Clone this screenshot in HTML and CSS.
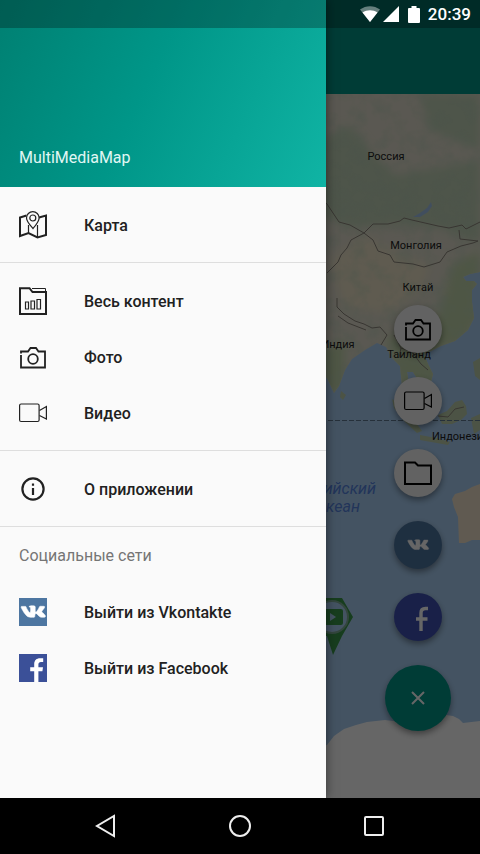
FILE: index.html
```html
<!DOCTYPE html>
<html lang="ru">
<head>
  <meta charset="UTF-8" />
  <meta name="viewport" content="width=device-width, initial-scale=1" />
  <title>MultiMediaMap</title>
  <link rel="stylesheet" href="styles.css">
</head>
<body>
  <!-- shared icons -->
  <svg class="sprite" aria-hidden="true">
    <symbol id="icon-camera" viewBox="0 0 28 28">
      <path d="M2 12V24.500H26V8.500H19.500L17 5H11.500L9 8.500H2V10.500" fill="none" stroke="currentColor" stroke-width="1.800" />
      <circle cx="14" cy="16" r="4.800" fill="none" stroke="currentColor" stroke-width="1.800" />
    </symbol>
    <symbol id="icon-video" viewBox="0 0 28 28">
      <rect x="0.600" y="5" width="19.500" height="17.500" rx="1.500" fill="none" stroke="currentColor" stroke-width="1.200" />
      <path d="M20.500 11.500L27.400 7.500V20L20.500 16.500" fill="none" stroke="currentColor" stroke-width="1.200" />
    </symbol>
    <symbol id="icon-vk" viewBox="0 0 28 28">
      <path d="M13.600 19.300h1.300s.5-.1.700-.4c.2-.3.200-.8.200-.8s0-2.300 1-2.700c1-.3 2.400 2.300 3.800 3.200 1 .8 1.900.6 1.900.6h3c1.200-.1.900-1.300.7-1.600-.4-.8-1.300-1.700-2.600-2.900-1.300-1.200-1.100-1 .5-3.100 1-1.400 1.700-2.300 1.500-2.900-.2-.5-1-.4-1-.4h-3.200c-.6 0-.8.2-1 .6 0 0-.7 1.600-1.500 2.900-1.400 2.400-2 2.500-2.300 2.300-.5-.4-.4-1.500-.4-2.300 0-2.500.4-3.500-.8-3.800-.4-.1-.7-.2-1.700-.2-1.300 0-2.400 0-3 .3-.5.200-.8.600-.6.700.3 0 .8.200 1.100.5.400.5.400 1.600.4 1.600s.2 3.200-.5 3.600c-.5.3-1.200-.3-2.700-2.800-.8-1.300-1.300-2.800-1.300-2.800-.2-.4-.4-.5-.9-.5H3c-1 0-1 .4-.8 1.100 0 0 2.600 5.600 5.400 8.200 1.900 1.700 3.900 1.600 6 1.600z" fill="currentColor" stroke="currentColor" stroke-width="0.600" />
    </symbol>
    <symbol id="icon-fb" viewBox="0 0 28 28">
      <path d="M15.200 28V17.200H11.200V13.200H15.200V10.200C15.200 6.200 17.600 4.200 21 4.200H24.200V8H22C20.200 8 19.400 8.900 19.400 10.400V13.200H24L23.400 17.200H19.400V28Z" fill="currentColor" />
    </symbol>
  </svg>

  <div class="screen">
    <div class="app">
      <header class="app-bar"></header>

      <main class="map-wrap">
        <svg class="map" viewBox="0 94 480 704" preserveAspectRatio="xMaxYMin slice">
          <defs>
            <filter id="soft" x="-20%" y="-20%" width="140%" height="140%">
              <feGaussianBlur stdDeviation="5" />
            </filter>
            <filter id="relief" x="0" y="0" width="100%" height="100%">
              <feTurbulence type="fractalNoise" baseFrequency="0.06" numOctaves="3" seed="4" />
              <feColorMatrix values="0 0 0 0 0.5  0 0 0 0 0.65  0 0 0 0 0.5  0 2.6 0 0 -1.1" />
            </filter>
            <clipPath id="land-clip">
              <path d="M300 94H480V272L470 274L463 277L466 281L474 281L477 284L472 290L472 302L474 318L468 330L455 341L441 346L431 351L424 354L428 364L433 374L431 382L424 388L418 380L413 372L407 372L409 384L414 396L410 398L402 386L400 366L392 358L386 347L377 343L365 350L352 359L345 370L339 386L334 393L328 380L300 340Z" />
            </clipPath>
          </defs>

          <!-- water and continents -->
          <rect class="sea" y="94" width="480" height="704" />
          <g clip-path="url(#land-clip)">
            <rect class="land" y="94" width="480" height="330" />
            <g filter="url(#soft)">
              <path class="forest" d="M320 140L350 125L370 150L395 175L480 160V245L440 228L400 225L350 228L320 215Z" />
              <path class="forest" d="M420 94H480V150L430 130Z" />
              <path class="desert" d="M330 262L362 235L395 252L430 266L420 290L390 312L345 308Z" />
              <path class="lowland" d="M452 265L480 250V320L460 345L420 350L440 310Z" />
              <path class="lowland" d="M320 350L345 340L345 390L325 400Z" />
              <path class="lowland" d="M386 335L440 340L440 390L400 390Z" />
            </g>
            <rect class="relief" y="94" x="300" width="180" height="310" filter="url(#relief)" />
            <path class="lake" d="M413 217L420 213L427 208L431 202L432 206L428 212L420 217Z" />
          </g>
          <g class="island">
            <path d="M341 391L346 395L343 400L340 397Z" />
            <path d="M392 399L403 407L414 420L422 431L417 433L404 421L394 408Z" />
            <path d="M438 415L447 411L455 402L462 400L466 406L467 414L461 420L452 424L442 424Z" />
            <path d="M420 435L436 438L450 442L448 445L420 440Z" />
            <path d="M473 362L480 358V380L475 376Z" />
            <path d="M471 418L480 414V430L474 434Z" />
          </g>
          <path class="australia" d="M480 484L472 487L465 491L455 494L452 499L454 507L458 517L459 543L465 543L472 540L480 540Z" />
          <path class="ice" d="M300 752L327 745L334 736L344 729L356 725L367 722L385 720L410 723L438 721L446 715L453 716L459 719L463 723L480 721V798H300Z" />

          <!-- borders -->
          <g class="border">
            <path d="M320 197L327 204L339 222L350 225L364 233L373 224L388 224L400 221L404 218L412 220L438 226L449 228L462 225L466 229L480 222" />
            <path d="M364 233L373 240L378 251L390 255L394 262L413 264L424 267L440 262L447 252L461 246L473 243L478 241L460 239L459 230" />
            <path d="M364 233L351 240L347 248L341 255L338 262L327 273" />
            <path d="M337 298L337 307L344 314L355 321L364 324L372 328L380 327L387 335L381 345" />
            <path d="M338 316L348 323L366 330" />
            <path d="M394 335L401 348L399 358M401 348L412 352L421 364L428 370M410 340L424 348" />
            <path d="M438 416L448 417L455 409L464 407" />
          </g>
          <path class="equator" d="M300 420.500H480" />

          <!-- labels -->
          <g class="label" text-anchor="middle">
            <text x="386" y="160">Россия</text>
            <text x="416" y="249">Монголия</text>
            <text x="418" y="291">Китай</text>
            <text x="338" y="348">Индия</text>
            <text x="409" y="358">Таиланд</text>
          </g>
          <text class="label" x="432" y="440">Индонезия</text>
          <g class="label label-sea" text-anchor="end">
            <text x="376" y="494">Индийский</text>
            <text x="360" y="512">океан</text>
          </g>

          <!-- video marker -->
          <g class="marker">
            <path class="marker-body" d="M324 598H342L353 617L342 636L333 655L327 636H324L312 617Z" />
            <circle class="marker-hole" cx="332" cy="617" r="16" />
            <rect class="marker-body" x="322" y="609" width="21" height="16" rx="2" />
            <path class="marker-play" d="M330 613L336 617L330 621Z" />
          </g>
        </svg>
      </main>

      <div class="fab-menu">
        <button class="fab" aria-label="Фото"><svg class="icon"><use href="#icon-camera" /></svg></button>
        <button class="fab" aria-label="Видео"><svg class="icon"><use href="#icon-video" /></svg></button>
        <button class="fab" aria-label="Файлы">
          <svg class="icon" viewBox="0 0 28 28">
            <path d="M1 25V3.500H11L14 6.500H27V25Z" fill="none" stroke="currentColor" stroke-width="2" />
          </svg>
        </button>
        <button class="fab fab-vk" aria-label="Vkontakte"><svg class="icon icon-small"><use href="#icon-vk" /></svg></button>
        <button class="fab fab-fb" aria-label="Facebook">
          <svg class="icon" viewBox="0 0 28 28">
            <path d="M17 28V16H12M24 5.500H21.500Q17 5.500 17 10V16H23.500" fill="none" stroke="currentColor" stroke-width="3.400" />
          </svg>
        </button>
        <button class="fab fab-main" aria-label="Закрыть">
          <svg class="icon icon-close" viewBox="0 0 14 14">
            <path d="M1 1L13 13M13 1L1 13" stroke="currentColor" stroke-width="2" />
          </svg>
        </button>
      </div>
    </div>

    <div class="scrim"></div>

    <nav class="drawer">
      <div class="drawer-header">
        <h1>MultiMediaMap</h1>
      </div>

      <div class="group">
        <a href="#map" class="item">
          <svg class="icon" viewBox="0 0 28 28">
            <path d="M7.500 4.500L1 6.500V25L9.500 22L18.500 26.500L27 24V4.500L20 6.500" fill="none" stroke="currentColor" stroke-width="2" />
            <path d="M9.500 14V22M18.500 14V26" fill="none" stroke="currentColor" stroke-width="1.200" />
            <path d="M14 17.500C11 14 7.500 10.500 7.500 7A6.300 6.300 0 0 1 20.100 7C20.100 10.500 17 14 14 17.500Z" fill="#fafafa" stroke="currentColor" stroke-width="1.200" />
            <circle cx="13.800" cy="7" r="3" fill="none" stroke="currentColor" stroke-width="1.200" />
          </svg>
          Карта
        </a>
      </div>

      <div class="group">
        <a href="#all" class="item">
          <svg class="icon" viewBox="0 0 28 28">
            <path d="M1 27V1.200H10.500L13.500 5H27V27Z" fill="none" stroke="currentColor" stroke-width="2" />
            <path d="M13 1.500H26.500V5" fill="none" stroke="currentColor" stroke-width="1" />
            <path d="M6.500 15H9.500V22H6.500ZM12 14H15.500V22H12ZM18 12.500H21.500V22H18Z" fill="none" stroke="currentColor" stroke-width="1.200" />
          </svg>
          Весь контент
        </a>
        <a href="#photo" class="item">
          <svg class="icon"><use href="#icon-camera" /></svg>
          Фото
        </a>
        <a href="#video" class="item">
          <svg class="icon"><use href="#icon-video" /></svg>
          Видео
        </a>
      </div>

      <div class="group">
        <a href="#about" class="item">
          <svg class="icon" viewBox="0 0 28 28">
            <circle cx="14" cy="14" r="10.600" fill="none" stroke="currentColor" stroke-width="2.200" />
            <path d="M14 13V20M14 8.500V10.700" stroke="currentColor" stroke-width="2.200" />
          </svg>
          О приложении
        </a>
      </div>

      <div class="group group-social">
        <h2>Социальные сети</h2>
        <a href="#vk-logout" class="item">
          <svg class="icon logo logo-vk"><use href="#icon-vk" /></svg>
          Выйти из Vkontakte
        </a>
        <a href="#fb-logout" class="item">
          <svg class="icon logo logo-fb"><use href="#icon-fb" /></svg>
          Выйти из Facebook
        </a>
      </div>
    </nav>

    <div class="status-bar">
      <svg class="wifi" viewBox="0 0 20 16">
        <path d="M0 3.500C6 -1 14 -1 20 3.500L10 16Z" fill="#fff" opacity="0.400" />
        <path d="M2.500 6.500C7 3.500 13 3.500 17.500 6.500L10 16Z" fill="#fff" />
      </svg>
      <svg class="signal" viewBox="0 0 16 16"><path d="M0 16L16 0V16Z" fill="#fff" /></svg>
      <svg class="battery" viewBox="0 0 12 17"><path d="M3.500 0H8.500V2H11Q12 2 12 3V16Q12 17 11 17H1Q0 17 0 16V3Q0 2 1 2H3.500Z" fill="#fff" /></svg>
      <time>20:39</time>
    </div>
  </div>

  <footer class="nav-bar">
    <button aria-label="Назад">
      <svg viewBox="0 0 24 24"><path d="M20 2V22L3 12Z" /></svg>
    </button>
    <button aria-label="Домой">
      <svg viewBox="0 0 24 24"><circle cx="12" cy="12" r="10" /></svg>
    </button>
    <button aria-label="Обзор">
      <svg viewBox="0 0 24 24"><rect x="3" y="3" width="18" height="18" rx="1" /></svg>
    </button>
  </footer>
</body>
</html>
```
FILE: styles.css
```css
* {
  margin: 0;
  padding: 0;
  box-sizing: border-box;
}

body {
  height: 100vh;
  display: flex;
  flex-direction: column;
  font-family: Roboto, sans-serif;
  background: #000;
  overflow: hidden;
}

button {
  border: none;
  background: none;
  cursor: pointer;
}

svg {
  display: block;
}

.sprite {
  position: absolute;
  width: 0;
  height: 0;
}

.icon {
  width: 28px;
  height: 28px;
  flex-shrink: 0;
}

.screen {
  position: relative;
  flex: 1;
  min-height: 0;
  overflow: hidden;
}

/* map screen */

.app {
  height: 100%;
  display: flex;
  flex-direction: column;
}

.app-bar {
  height: 94px;
  background-color: #009688;
}

.map-wrap {
  flex: 1;
  min-height: 0;
}

.map {
  width: 100%;
  height: 100%;
}

.sea {
  fill: #abd0f5;
}

.land {
  fill: #e0dccc;
}

.forest {
  fill: #c2d4b8;
}

.desert {
  fill: #eee4c8;
}

.lowland {
  fill: #c4d8ac;
}

.relief {
  opacity: 0.4;
}

.lake {
  fill: #a3c4ec;
}

.island {
  fill: #bdd0ac;
}

.australia {
  fill: #f0e2ca;
}

.ice {
  fill: #fff;
}

.border {
  fill: none;
  stroke: #8c867c;
  stroke-width: 1;
}

.equator {
  stroke: #5f7891;
  stroke-dasharray: 5 2;
}

.label {
  font-size: 11px;
  fill: #222;
}

.label-sea {
  font-size: 16px;
  font-style: italic;
  fill: #5584e0;
}

.marker-body {
  fill: #3b9a4c;
}

.marker-hole {
  fill: #abd0f5;
  stroke: #7fae9a;
  stroke-width: 2;
}

.marker-play {
  fill: #abd0f5;
}

.fab-menu {
  position: absolute;
  right: 29px;
  bottom: 67px;
  display: flex;
  flex-direction: column;
  align-items: center;
  gap: 24px;
}

.fab {
  width: 48px;
  height: 48px;
  display: flex;
  align-items: center;
  justify-content: center;
  border-radius: 50%;
  background-color: #f5f5f5;
  color: #000;
  box-shadow: 0 3px 6px rgba(0, 0, 0, 0.4);
}

.fab-vk {
  background-color: #4d76a1;
  color: #fff;
}

.fab-fb {
  background-color: #3f51b5;
  color: #fff;
}

.fab-main {
  width: 66px;
  height: 66px;
  background-color: #009688;
  color: #fff;
}

.icon-small {
  width: 24px;
  height: 24px;
}

.icon-close {
  width: 14px;
  height: 14px;
}

.scrim {
  position: absolute;
  inset: 0;
  background-color: rgba(0, 0, 0, 0.6);
}

/* navigation drawer */

.drawer {
  position: absolute;
  top: 0;
  bottom: 0;
  left: 0;
  width: 68%;
  background-color: #fafafa;
  box-shadow: 0 0 10px rgba(0, 0, 0, 0.5);
}

.drawer-header {
  height: 187px;
  display: flex;
  align-items: flex-end;
  padding: 19px;
  background: linear-gradient(115deg, #008072, #009688 45%, #10b4a4);
}

.drawer-header h1 {
  font-size: 16px;
  line-height: 20px;
  font-weight: 400;
  color: #e0f7f4;
}

.group {
  padding: 10px 0 9px;
  border-bottom: 1px solid #dedede;
}

.group-social {
  padding: 0;
  border-bottom: none;
}

.group h2 {
  padding-left: 19px;
  font-size: 16px;
  line-height: 57px;
  font-weight: 400;
  color: #757575;
}

.item {
  height: 56px;
  display: flex;
  align-items: center;
  gap: 37px;
  padding: 0 19px;
  font-size: 16px;
  font-weight: 500;
  color: #212121;
  text-decoration: none;
}

.logo {
  color: #fff;
}

.logo-vk {
  background-color: #4d76a1;
}

.logo-fb {
  background-color: #3b5098;
}

/* system bars */

.status-bar {
  position: absolute;
  top: 0;
  left: 0;
  right: 0;
  height: 28px;
  display: flex;
  align-items: center;
  justify-content: flex-end;
  padding-right: 9px;
  background-color: rgba(0, 0, 0, 0.27);
}

.wifi {
  width: 20px;
  height: 16px;
  margin-right: 3px;
}

.signal {
  width: 16px;
  height: 16px;
  margin-right: 9px;
}

.battery {
  width: 12px;
  height: 17px;
  margin-right: 8px;
}

.status-bar time {
  font-size: 17px;
  font-weight: 500;
  color: #fff;
}

.nav-bar {
  height: 56px;
  display: grid;
  grid-template-columns: repeat(3, 1fr);
  padding: 0 8%;
  background-color: #000;
}

.nav-bar button {
  display: flex;
  align-items: center;
  justify-content: center;
}

.nav-bar svg {
  width: 24px;
  height: 24px;
  fill: none;
  stroke: #eee;
  stroke-width: 2;
}
```
